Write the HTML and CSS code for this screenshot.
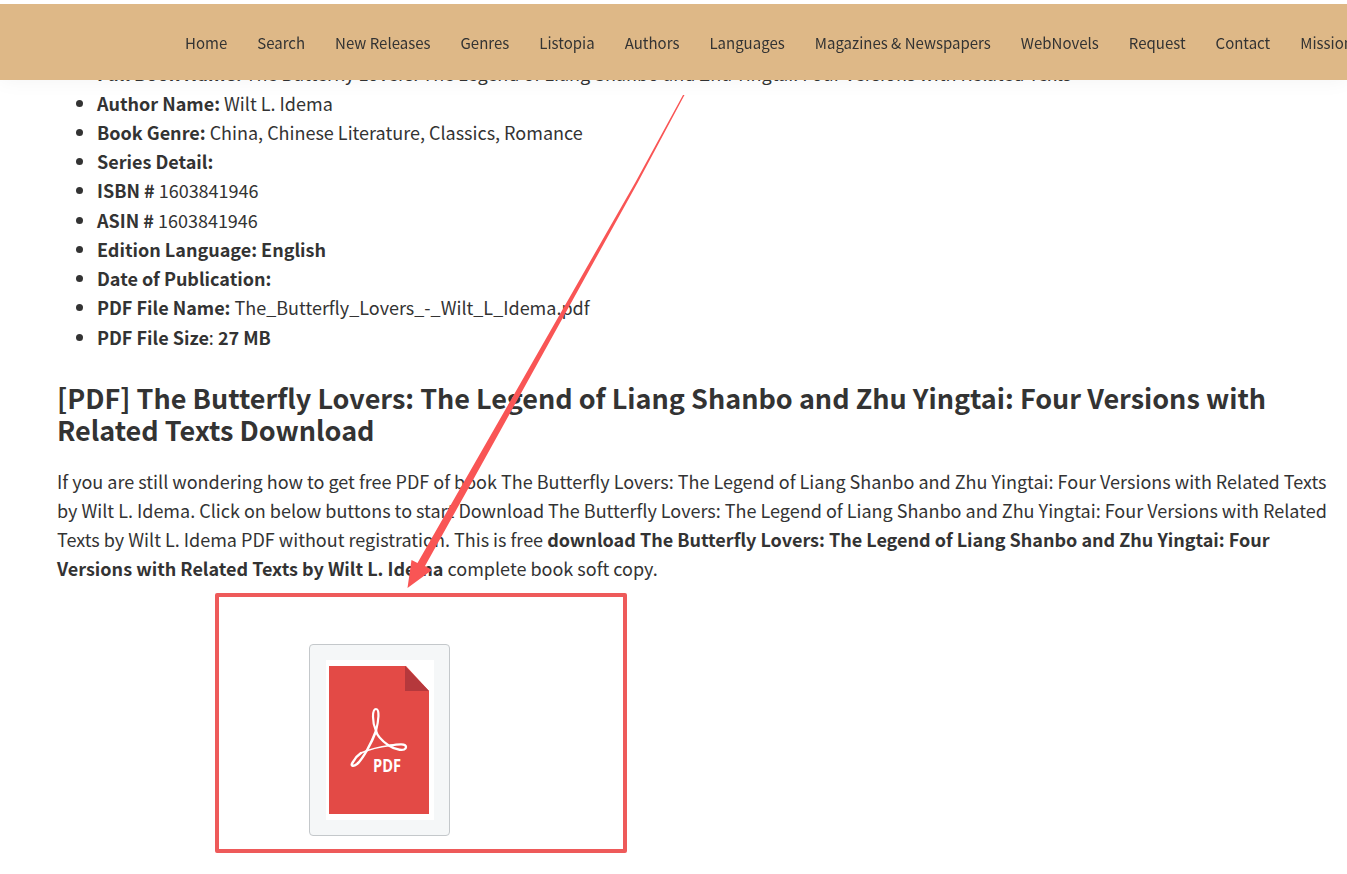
FILE: index.html
```html
<!DOCTYPE html>
<html lang="en">
<head>
    <meta charset="UTF-8">
    <meta name="viewport" content="width=device-width, initial-scale=1.0">
    <title>The Butterfly Lovers PDF Download</title>
    <link rel="stylesheet" href="styles.css">
</head>
<body>
    <header class="site-header">
        <nav class="nav">
            <a>Home</a>
            <a>Search</a>
            <a>New Releases</a>
            <a>Genres</a>
            <a>Listopia</a>
            <a>Authors</a>
            <a>Languages</a>
            <a>Magazines &amp; Newspapers</a>
            <a>WebNovels</a>
            <a>Request</a>
            <a>Contact</a>
            <a>Mission</a>
        </nav>
    </header>

    <main class="content">
        <ul class="details">
            <li><b>Full Book Name:</b> The Butterfly Lovers: The Legend of Liang Shanbo and Zhu Yingtai: Four Versions with Related Texts</li>
            <li><b>Author Name:</b> Wilt L. Idema</li>
            <li><b>Book Genre:</b> China, Chinese Literature, Classics, Romance</li>
            <li><b>Series Detail:</b></li>
            <li><b>ISBN #</b> 1603841946</li>
            <li><b>ASIN #</b> 1603841946</li>
            <li><b>Edition Language: English</b></li>
            <li><b>Date of Publication:</b></li>
            <li><b>PDF File Name:</b> The_Butterfly_Lovers_-_Wilt_L_Idema.pdf</li>
            <li><b>PDF File Size</b>: <b>27 MB</b></li>
        </ul>

        <h2 class="title">[PDF] The Butterfly Lovers: The Legend of Liang Shanbo and Zhu Yingtai: Four Versions with<br>Related Texts Download</h2>

        <p class="text">If you are still wondering how to get free PDF of book The Butterfly Lovers: The Legend of Liang Shanbo and Zhu Yingtai: Four Versions with Related Texts<br>
        by Wilt L. Idema. Click on below buttons to start Download The Butterfly Lovers: The Legend of Liang Shanbo and Zhu Yingtai: Four Versions with Related<br>
        Texts by Wilt L. Idema PDF without registration. This is free <b>download The Butterfly Lovers: The Legend of Liang Shanbo and Zhu Yingtai: Four<br>
        Versions with Related Texts by Wilt L. Idema</b> complete book soft copy.</p>

        <div class="download">
            <a class="pdf-button">
                <svg width="108" height="160" viewBox="0 0 108 160">
                    <rect width="108" height="160" fill="#fff"/>
                    <path d="M3 6H80L103 31V154H3Z" fill="#e34a46"/>
                    <path d="M79 6L103 31H79Z" fill="#b5383c"/>
                    <g fill="none" stroke="#fff" stroke-linecap="round">
                        <path d="M50 71C46 62 46 49 50 49C54 49 52.5 61 50 71" stroke-width="2.2"/>
                        <path d="M50 71C46 82 37 99 31 104C27 107 24 106 27 102C29 98 32 95 35 93" stroke-width="2.5"/>
                        <path d="M35 93C42 90 52 87 64 85.5" stroke-width="1.7"/>
                        <path d="M64 85.5C73 84 80 83.5 80 87C80 92 69 90 62 85C55 80 51 75 50 71" stroke-width="2.3"/>
                    </g>
                    <text class="pdf-label" x="47" y="112" textLength="28" lengthAdjust="spacingAndGlyphs">PDF</text>
                </svg>
            </a>
        </div>
    </main>

    <!-- Download hint -->
    <div class="hint-box"></div>
    <svg class="hint-arrow" width="1347" height="874" viewBox="0 0 1347 874">
        <path d="M683 95H684.5L637.5 183L473 480L425 566L432 570L407.5 588L411.5 560L417.500 563L465 480L635 183Z" fill="#f95555"/>
    </svg>
</body>
</html>
```

FILE: styles.css
```css
body {
    margin: 0;
    height: 874px;
    overflow: hidden;
    background-color: #fff;
    font-family: "Noto Sans CJK SC", "Noto Sans", sans-serif;
    font-size: 18px;
    line-height: 29.25px;
    color: #333;
}
b {
    font-weight: 600;
}
.site-header {
    position: fixed;
    top: 0;
    left: 0;
    right: 0;
    z-index: 2;
    height: 76px;
    overflow: hidden;
    border-top: 4px solid #fff;
    background-color: #deb887;
    background-clip: padding-box;
    box-shadow: 0 0 20px rgba(0, 0, 0, 0.05);
}
.nav {
    display: flex;
    align-items: center;
    gap: 30px;
    height: 78px;
    padding-left: 185px;
    font-size: 15px;
    white-space: nowrap;
}
.content {
    padding: 59.4px 20px 0 57px;
    white-space: nowrap;
}
.details {
    margin: 0;
    padding-left: 40px;
}
.title {
    margin: 29.9px 0 20.8px;
    font-size: 27px;
    line-height: 32px;
    font-weight: 600;
}
.text {
    margin: 0;
    line-height: 29px;
}
.download {
    padding: 61px 0 0 252px;
}
.pdf-button {
    display: flex;
    justify-content: center;
    align-items: center;
    width: 139px;
    height: 190px;
    border: 1px solid #c4c8cb;
    border-radius: 4px;
    background-color: #f5f7f8;
}
.pdf-label {
    fill: #fff;
    font-family: "Open Sans", sans-serif;
    font-size: 18px;
    font-weight: 700;
}
.hint-box {
    position: absolute;
    top: 593px;
    left: 215px;
    width: 404px;
    height: 252px;
    border: 4px solid #ee5a5a;
    border-radius: 2px;
}
.hint-arrow {
    position: absolute;
    top: 0;
    left: 0;
    z-index: 3;
}
```
